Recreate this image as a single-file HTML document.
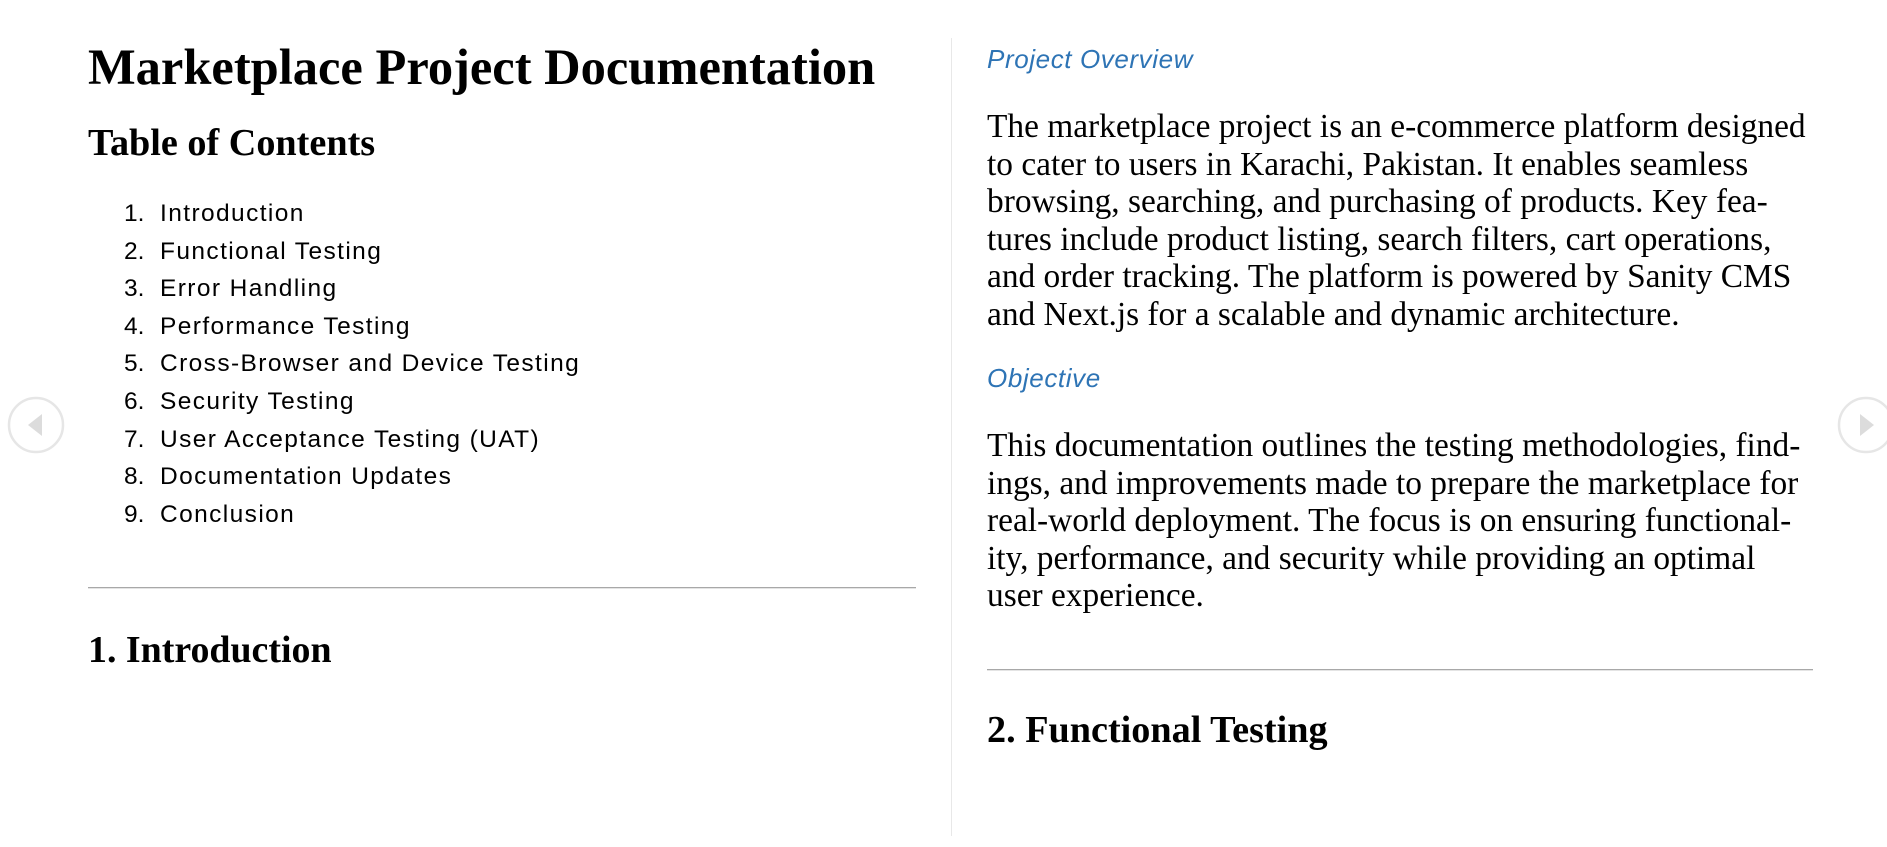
<!DOCTYPE html>
<html><head><meta charset="utf-8"><style>
html,body{margin:0;padding:0;background:#fff;width:1887px;height:847px;overflow:hidden;position:relative}
.a{position:absolute;white-space:nowrap;margin:0}
.serif{font-family:"Liberation Serif",serif;color:#000}
.sans{font-family:"Liberation Sans",sans-serif;color:#000}
.li{font-size:24.5px;line-height:37.6px;letter-spacing:1.4px}
.li span{display:inline-block;width:36px;letter-spacing:0}
.blue{font-family:"Liberation Sans",sans-serif;font-style:italic;color:#2e74b5;font-size:26px;letter-spacing:0.6px}
.p{font-family:"Liberation Serif",serif;font-size:33.4px;line-height:37.5px;color:#000}
</style></head><body>
<div class="a serif" style="left:88px;top:35px;font-size:50.5px;font-weight:bold;line-height:64px">Marketplace Project Documentation</div>
<div class="a serif" style="left:88px;top:119px;font-size:38.2px;font-weight:bold;line-height:48px">Table of Contents</div>
<div class="a sans li" style="left:124px;top:195px">
<span>1.</span>Introduction<br><span>2.</span>Functional Testing<br><span>3.</span>Error Handling<br><span>4.</span>Performance Testing<br><span>5.</span>Cross-Browser and Device Testing<br><span>6.</span>Security Testing<br><span>7.</span>User Acceptance Testing (UAT)<br><span>8.</span>Documentation Updates<br><span>9.</span>Conclusion</div>
<div class="a" style="left:88px;top:587px;width:828px;height:1px;background:#a8a8a8;border-bottom:1px solid #e4e4e4"></div>
<div class="a serif" style="left:88px;top:626px;font-size:37.9px;font-weight:bold;line-height:48px">1. Introduction</div>

<div class="a" style="left:951px;top:38px;width:1px;height:798px;background:#e8e8e8"></div>

<div class="a blue" style="left:987px;top:44px;line-height:30px">Project Overview</div>
<div class="a p" style="left:987px;top:108px">The marketplace project is an e-commerce platform designed<br>to cater to users in Karachi, Pakistan. It enables seamless<br>browsing, searching, and purchasing of products. Key fea-<br>tures include product listing, search filters, cart operations,<br>and order tracking. The platform is powered by Sanity CMS<br>and Next.js for a scalable and dynamic architecture.</div>
<div class="a blue" style="left:987px;top:363px;line-height:30px">Objective</div>
<div class="a p" style="left:987px;top:427px">This documentation outlines the testing methodologies, find-<br>ings, and improvements made to prepare the marketplace for<br>real-world deployment. The focus is on ensuring functional-<br>ity, performance, and security while providing an optimal<br>user experience.</div>
<div class="a" style="left:987px;top:669px;width:826px;height:1px;background:#a8a8a8;border-bottom:1px solid #e4e4e4"></div>
<div class="a serif" style="left:987px;top:706px;font-size:38.2px;font-weight:bold;line-height:48px">2. Functional Testing</div>

<svg class="a" style="left:0;top:390px" width="80" height="80" viewBox="0 0 80 80">
<circle cx="36" cy="35" r="27" fill="#fff" stroke="#e6e6e6" stroke-width="2.5"/>
<polygon points="42,24 42,46 28,35" fill="#dcdcdc"/>
</svg>
<svg class="a" style="left:1830px;top:390px" width="57" height="80" viewBox="0 0 57 80">
<circle cx="36" cy="35" r="27" fill="#fff" stroke="#e6e6e6" stroke-width="2.5"/>
<polygon points="30,24 30,46 44,35" fill="#dcdcdc"/>
</svg>
</body></html>
